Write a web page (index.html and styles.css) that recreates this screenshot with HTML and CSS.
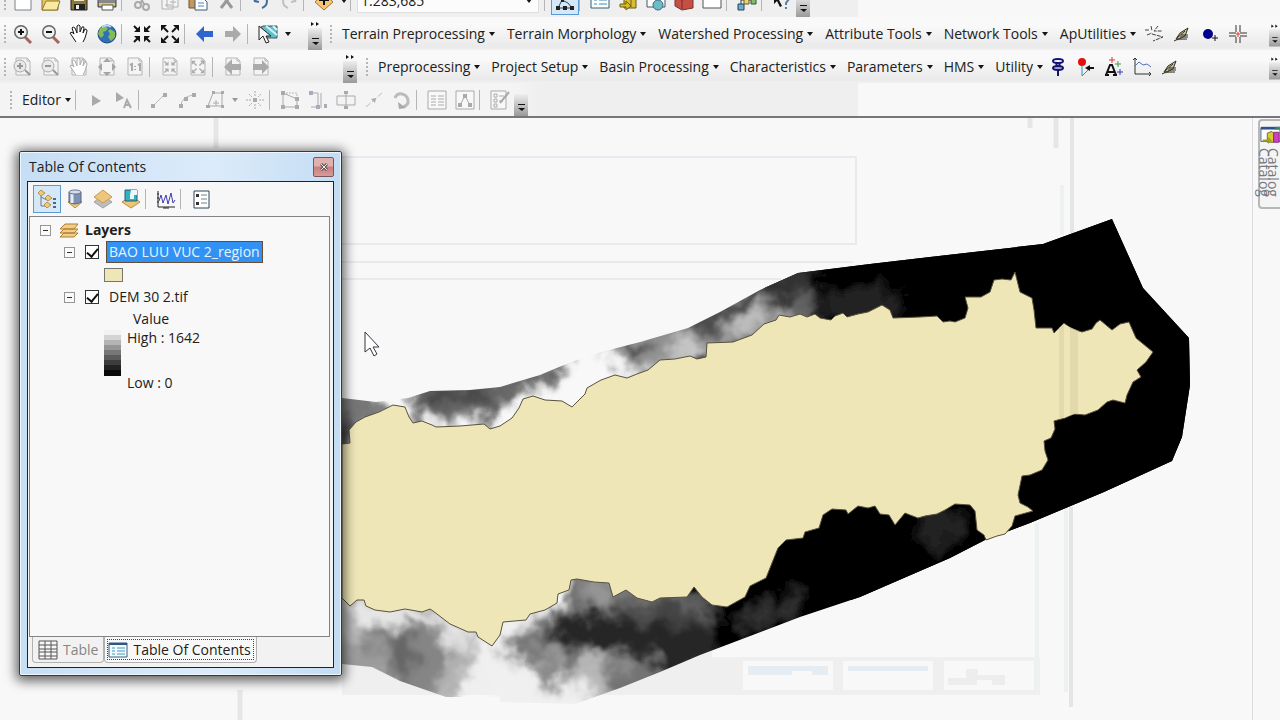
FILE: index.html
```html
<!DOCTYPE html>
<html lang="en">
<head>
<meta charset="utf-8">
<meta name="viewport" content="width=device-width, initial-scale=1">
<title>Map workspace</title>
<link rel="stylesheet" href="styles.css">
</head>
<body>
<svg class="defs" aria-hidden="true">
  <symbol id="page" viewBox="0 0 20 20"><path d="M3 1h11l3 3v14H3zM14 1v3h3" fill="#f4f4f4" stroke="#b5b5b5"/></symbol>
  <symbol id="lens" viewBox="0 0 20 20"><path d="M12 13l6 6" stroke="#a5655d" stroke-width="3"/><circle cx="8" cy="8" r="6.300" fill="#eef0f2" stroke="#666" stroke-width="1.500"/></symbol>
  <symbol id="hand" viewBox="0 0 20 20"><path d="M7 18L3 12 1 9q2-2 4 1L3 4q1-2 3 0l2 5L8 2q2-2 3 0v6l2-5q2-1 2 1l-1 5 2-4q2 0 2 2l-2 7-2 4" fill="#fff" stroke="currentColor"/></symbol>
  <symbol id="inward" viewBox="0 0 20 20"><path d="M2 2l4 4M18 2l-4 4M2 18l4-4M18 18l-4-4" fill="none" stroke="currentColor" stroke-width="2"/><path d="M8 2v6H2zM12 2v6h6zM8 18v-6H2zM12 18v-6h6z" fill="currentColor"/></symbol>
  <symbol id="outward" viewBox="0 0 20 20"><path d="M4 4l4 4M16 4l-4 4M4 16l4-4M16 16l-4-4" fill="none" stroke="currentColor" stroke-width="2"/><path d="M1 1h6L1 7zM19 1h-6l6 6zM1 19h6l-6-6zM19 19h-6l6-6z" fill="currentColor"/></symbol>
  <symbol id="arrow" viewBox="0 0 20 20"><path d="M1 10l8-8v5h9v6H9v5z" fill="currentColor"/></symbol>
  <symbol id="caret" viewBox="0 0 6 4"><path d="M0 0h6L3 4z" fill="currentColor"/></symbol>
  <symbol id="pen" viewBox="0 0 20 20"><path d="M4 15L8 9l8-5-3 8-6 3zM5 14l8-7M9 11h7M8 13h8M2 17l4-2h9" fill="#c9c795" stroke="#302c28"/></symbol>
  <symbol id="diamond" viewBox="0 0 20 20"><path d="M1 13l9-7 9 7-9 6z" fill="#bdbdbd" stroke="#a2a2a2"/><path d="M1 8l9-7 9 7-9 6z" fill="#edc67b" stroke="#c69a4b"/></symbol>
  <symbol id="drop" viewBox="0 0 14 34"><path d="M0 11h14v22H0z" fill="url(#moreFill)"/><path d="M4 21h7v1H4zM4 25h7l-3 3z" fill="#111"/></symbol>
  <symbol id="more" viewBox="0 0 14 34"><use href="#drop"/><path d="M3 5l3 2-3 2zM8 5l3 2-3 2z" fill="#111"/></symbol>
  <linearGradient id="moreFill" x2="0" y2="1"><stop offset="0" stop-color="#eee"/><stop offset="1" stop-color="#999"/></linearGradient>
</svg>

<header class="toolbars">
  <div class="bar bar-standard" role="toolbar" aria-label="Standard">
    <i class="grip"></i>
    <button class="tool" aria-label="New"><svg viewBox="0 0 20 20"><path d="M2 1h12l4 4v14H2z" fill="#fff" stroke="#77838d"/></svg></button>
    <button class="tool" aria-label="Open"><svg viewBox="0 0 20 20"><path d="M1 19V4h7l2 3h7v12z" fill="#e5c763" stroke="#8f762c"/><path d="M1 19l4-9h14l-3 9z" fill="#fae9a2" stroke="#8f762c"/></svg></button>
    <button class="tool" aria-label="Save"><svg viewBox="0 0 20 20"><path d="M2 2h16v17H2z" fill="#8c7838" stroke="#2b2517"/><path d="M5 2h10v8H5z" fill="#f0eacb"/><path d="M5 13h11v6H5z" fill="#222"/><path d="M7 14h3v4H7z" fill="#eee"/></svg></button>
    <button class="tool" aria-label="Print"><svg viewBox="0 0 20 20"><path d="M5 1h11v8H5z" fill="#fff" stroke="#555"/><path d="M1 8h18v8H1z" fill="#888" stroke="#444"/><path d="M2 12h16v3H2z" fill="#ddc96d"/><path d="M5 14h11v5H5z" fill="#fff" stroke="#555"/></svg></button>
    <i class="sep"></i>
    <button class="tool off" aria-label="Cut"><svg viewBox="0 0 20 20"><path d="M5 1l7 12M15 1L8 13" stroke="#aaa" stroke-width="2"/><circle cx="6" cy="14" r="3" fill="none" stroke="#aaa" stroke-width="2"/><circle cx="14" cy="16" r="3" fill="none" stroke="#aaa" stroke-width="2"/></svg></button>
    <button class="tool off" aria-label="Copy"><svg viewBox="0 0 20 20"><path d="M2 3h11v15H2zM7 1h11v15H7zM10 8h6M10 11h6M5 14h7" fill="#f4f4f4" stroke="#b2b2b2"/></svg></button>
    <button class="tool" aria-label="Paste"><svg viewBox="0 0 20 20"><path d="M1 1h14v16H1z" fill="#c69758" stroke="#735327"/><path d="M7 7h8l4 4v8H7z" fill="#fff" stroke="#3c5979"/><path d="M10 12h6M10 15h6" stroke="#4d83bb"/></svg></button>
    <button class="tool off" aria-label="Delete"><svg viewBox="0 0 20 20"><path d="M5 2l11 15M16 3L5 17" stroke="#999" stroke-width="3"/></svg></button>
    <i class="sep"></i>
    <button class="tool" aria-label="Undo"><svg viewBox="0 0 20 20"><path d="M3 10q11-9 13 0 0 5-5 7M3 10l5 1" fill="none" stroke="#426ca0" stroke-width="2"/></svg></button>
    <button class="tool off" aria-label="Redo"><svg viewBox="0 0 20 20"><path d="M17 10Q6 1 4 10q0 5 5 7M17 10l-5 1" fill="none" stroke="#c0c0c0" stroke-width="2"/></svg></button>
    <i class="sep"></i>
    <button class="tool" aria-label="Add Data"><svg viewBox="0 0 20 20"><path d="M1 11l9-9 9 9-9 8z" fill="#f3c575" stroke="#a57631"/><path d="M10 3v11M5 9h10" stroke="#111" stroke-width="2"/></svg></button>
    <button class="mini" aria-label="Add Data options"><svg class="caret"><use href="#caret"/></svg></button>
    <i class="sep"></i>
    <label class="scale"><input type="text" value="1:283,685" aria-label="Map scale"><svg class="caret"><use href="#caret"/></svg></label>
    <i class="sep"></i>
    <button class="tool pressed" aria-label="Editor Toolbar"><svg viewBox="0 0 20 20"><path d="M3 17h14M3 17L7 9l6 3 4 5M8 9L17 1" fill="none" stroke="#34465d"/><path d="M1 15h4v4H1zM8 15h4v4H8zM15 15h4v4h-4zM6 8h3v3H6z" fill="#222"/></svg></button>
    <i class="sep"></i>
    <button class="tool" aria-label="Table Of Contents"><svg viewBox="0 0 20 20"><path d="M1 2h18v15H1z" fill="#fff" stroke="#355a72"/><path d="M4 9h3M9 9h8M4 13h3M9 13h8" stroke="#378eb8"/></svg></button>
    <button class="tool" aria-label="Catalog"><svg viewBox="0 0 20 20"><path d="M6 1h12v16H6z" fill="#d9bd32" stroke="#64591b"/><path d="M13 1v15M2 13h6v-3l5 5-5 4v-3H2z" fill="#d7bc25" stroke="#6c611b"/></svg></button>
    <button class="tool" aria-label="Search"><svg viewBox="0 0 20 20"><path d="M1 1h18v15H1z" fill="#fff" stroke="#456"/><circle cx="12" cy="14" r="5" fill="#6dbec2" stroke="#37678c"/></svg></button>
    <button class="tool" aria-label="ArcToolbox"><svg viewBox="0 0 20 20"><path d="M1 6l7-5 11 5v11l-11 2-7-4z" fill="#c64e44" stroke="#77352f"/><path d="M1 6l7 3 11-3M8 9v9" stroke="#782e29" fill="none"/></svg></button>
    <button class="tool" aria-label="Python"><svg viewBox="0 0 20 20"><path d="M1 1h18v16H1z" fill="#fff" stroke="#555"/></svg></button>
    <i class="sep"></i>
    <button class="tool" aria-label="ModelBuilder"><svg viewBox="0 0 20 20"><path d="M4 14V9h12" fill="none" stroke="#333"/><path d="M1 13h6v6H1z" fill="#6badd5" stroke="#245"/><path d="M7 7h5v6H7z" fill="#ead55e" stroke="#654"/><path d="M14 7h5v6h-5z" fill="#83bd6d" stroke="#353"/></svg></button>
    <i class="sep"></i>
    <button class="tool" aria-label="What's This?"><svg viewBox="0 0 20 20"><path d="M2 1v12l3-3 3 6 2-1-3-6h4z" fill="#111"/><path d="M12 6q7-4 5 2l-3 4v2m0 2v2" fill="none" stroke="#557da4" stroke-width="2"/></svg></button>
    <svg class="more"><use href="#drop"/></svg>
  </div>

  <div class="bar" role="toolbar" aria-label="Tools">
    <i class="grip"></i>
    <button class="tool" aria-label="Zoom In"><svg viewBox="0 0 20 20"><use href="#lens"/><path d="M5 8h6M8 5v6" stroke="#111" stroke-width="2"/></svg></button>
    <button class="tool" aria-label="Zoom Out"><svg viewBox="0 0 20 20"><use href="#lens"/><path d="M5 8h6" stroke="#111" stroke-width="2"/></svg></button>
    <button class="tool" aria-label="Pan"><svg><use href="#hand"/></svg></button>
    <button class="tool" aria-label="Full Extent"><svg viewBox="0 0 20 20"><circle cx="10" cy="10" r="9" fill="#2e70b5" stroke="#1d477d"/><path d="M3 4l5-2 3 2-2 3-3 1 1 3-3 3-3-4zM13 5l5 3v5l-4 4-3-4 2-3-2-3z" fill="#86ba58"/><path d="M5 3q5-3 9 0" stroke="#b7dcf6" stroke-width="2" fill="none"/></svg></button>
    <i class="sep"></i>
    <button class="tool" aria-label="Fixed Zoom In"><svg><use href="#inward"/></svg></button>
    <button class="tool" aria-label="Fixed Zoom Out"><svg><use href="#outward"/></svg></button>
    <i class="sep"></i>
    <button class="tool back" aria-label="Previous Extent"><svg><use href="#arrow"/></svg></button>
    <button class="tool forward off" aria-label="Next Extent"><svg viewBox="0 0 20 20"><path d="M18 10l-8-8v5H2v6h8v5z" fill="currentColor"/></svg></button>
    <i class="sep"></i>
    <button class="tool" aria-label="Select Features"><svg viewBox="0 0 20 20"><path d="M5 2h14v12H9L3 3z" fill="#5bc1ce" stroke="#455"/><path d="M8 2l11 9M15 2l4 4" stroke="#d7f2f2" stroke-width="2"/><path d="M1 2v14l4-4 3 7 3-1-3-6h5z" fill="#f5f5f5" stroke="#222"/></svg></button>
    <button class="mini" aria-label="Selection options"><svg class="caret"><use href="#caret"/></svg></button>
    <svg class="more more-tools"><use href="#more"/></svg>
    <i class="grip"></i>
    <nav class="menus menus-terrain" aria-label="Terrain tools">
      <button class="menu">Terrain Preprocessing<svg class="caret"><use href="#caret"/></svg></button>
      <button class="menu">Terrain Morphology<svg class="caret"><use href="#caret"/></svg></button>
      <button class="menu">Watershed Processing<svg class="caret"><use href="#caret"/></svg></button>
      <button class="menu">Attribute Tools<svg class="caret"><use href="#caret"/></svg></button>
      <button class="menu">Network Tools<svg class="caret"><use href="#caret"/></svg></button>
      <button class="menu">ApUtilities<svg class="caret"><use href="#caret"/></svg></button>
    </nav>
    <button class="tool" aria-label="Flow Path"><svg viewBox="0 0 20 20"><path d="M1 6h4M7 2l1 5M14 2l-4 5h8M3 11l5-2M8 10l11 3-10 4" fill="none" stroke="#444" stroke-dasharray="4 1"/></svg></button>
    <button class="tool" aria-label="Edit"><svg><use href="#pen"/></svg></button>
    <button class="tool" aria-label="Add Point"><svg viewBox="0 0 20 20"><circle cx="8" cy="10" r="5" fill="#00008c"/><path d="M12 14h6M15 11v6" stroke="#111"/></svg></button>
    <button class="tool" aria-label="Batch Point"><svg viewBox="0 0 20 20"><path d="M1 9h7M1 12h7M12 9h7M12 12h7M8 1v7M12 1v7M8 13v6M12 13v6" stroke="#333"/><path d="M8 10h4M10 8v5" stroke="#ee3424"/></svg></button>
    <svg class="more more-end"><use href="#more"/></svg>
  </div>

  <div class="bar" role="toolbar" aria-label="Layout">
    <i class="grip"></i>
    <button class="tool off" aria-label="Page Zoom In"><svg viewBox="0 0 20 20"><use href="#page"/><circle cx="7" cy="9" r="6" fill="#e9e9e9" stroke="#aaa"/><path d="M4 9h6M7 6v6M12 13l5 5" stroke="#999" stroke-width="2"/></svg></button>
    <button class="tool off" aria-label="Page Zoom Out"><svg viewBox="0 0 20 20"><use href="#page"/><circle cx="7" cy="9" r="6" fill="#e9e9e9" stroke="#aaa"/><path d="M4 9h6M12 13l5 5" stroke="#999" stroke-width="2"/></svg></button>
    <button class="tool off" aria-label="Page Pan"><svg viewBox="0 0 20 20"><use href="#page"/><use href="#hand"/></svg></button>
    <button class="tool off" aria-label="Whole Page"><svg viewBox="0 0 20 20"><use href="#page"/><path d="M10 1l4 4H6zM10 19l4-4H6zM1 10l4-4v8zM19 10l-4-4v8z" fill="#a4a4a4"/></svg></button>
    <button class="tool off" aria-label="Actual Size"><svg viewBox="0 0 20 20"><use href="#page"/><path d="M5 8l2-1v7M13 8l2-1v7M10 9v1M10 12v1" fill="none" stroke="#aaa" stroke-width="2"/></svg></button>
    <i class="sep"></i>
    <button class="tool off" aria-label="Page Fixed Zoom In"><svg viewBox="0 0 20 20"><use href="#page"/><use href="#inward" x="3" y="3" width="14" height="14"/></svg></button>
    <button class="tool off" aria-label="Page Fixed Zoom Out"><svg viewBox="0 0 20 20"><use href="#page"/><use href="#outward" x="3" y="3" width="14" height="14"/></svg></button>
    <i class="sep"></i>
    <button class="tool off" aria-label="Page Back"><svg viewBox="0 0 20 20"><use href="#page"/><use href="#arrow"/></svg></button>
    <button class="tool forward off" aria-label="Page Forward"><svg viewBox="0 0 20 20"><use href="#page"/><path d="M18 10l-7-7v4H2v6h9v4z" fill="currentColor"/></svg></button>
    <svg class="more more-layout"><use href="#more"/></svg>
    <i class="grip"></i>
    <nav class="menus" aria-label="Hydrology tools">
      <button class="menu">Preprocessing<svg class="caret"><use href="#caret"/></svg></button>
      <button class="menu">Project Setup<svg class="caret"><use href="#caret"/></svg></button>
      <button class="menu">Basin Processing<svg class="caret"><use href="#caret"/></svg></button>
      <button class="menu">Characteristics<svg class="caret"><use href="#caret"/></svg></button>
      <button class="menu">Parameters<svg class="caret"><use href="#caret"/></svg></button>
      <button class="menu">HMS<svg class="caret"><use href="#caret"/></svg></button>
      <button class="menu">Utility<svg class="caret"><use href="#caret"/></svg></button>
    </nav>
    <button class="tool" aria-label="Pin"><svg viewBox="0 0 20 20"><ellipse cx="10" cy="4" rx="5" ry="2" fill="#fff" stroke="#13136e" stroke-width="2"/><path d="M8 5l1 5M12 5l-1 5M10 13v6" stroke="#13136e" stroke-width="2"/><ellipse cx="10" cy="11" rx="5" ry="2" fill="#9ea5d8" stroke="#13136e" stroke-width="2"/></svg></button>
    <button class="tool" aria-label="Outlet"><svg viewBox="0 0 20 20"><path d="M6 9v10l9-9" fill="none" stroke="#1d9bb6"/><circle cx="6" cy="5" r="4" fill="#e80e0e"/><path d="M9 11l5-3v2h4v2h-4v2z" fill="#111"/></svg></button>
    <button class="tool" aria-label="Add Labels"><svg viewBox="0 0 20 20"><path d="M2 18L6 8h2l4 10M4 15h6M1 18h4M9 18h4" fill="none" stroke="#111" stroke-width="2"/><path d="M5 3h6M8 0v6" stroke="#dc3930"/><path d="M11 7h6M14 4v6" stroke="#439b4b"/><path d="M13 15h6M16 12v6" stroke="#3434c2"/></svg></button>
    <button class="tool" aria-label="Profile"><svg viewBox="0 0 20 20"><path d="M3 1v16h16M1 3l2-2 2 2M17 15l2 2-2 2" fill="none" stroke="#333"/><path d="M3 9l4-4 4 3 4-1 4 3" fill="none" stroke="#536cbd"/></svg></button>
    <button class="tool" aria-label="Edit Parameters"><svg><use href="#pen"/></svg></button>
    <svg class="more more-end"><use href="#more"/></svg>
  </div>

  <div class="bar bar-editor" role="toolbar" aria-label="Editor">
    <i class="grip"></i>
    <button class="menu">Editor<svg class="caret"><use href="#caret"/></svg></button>
    <i class="sep"></i>
    <button class="tool off" aria-label="Edit Tool"><svg viewBox="0 0 20 20"><path d="M6 5l9 6-9 5z" fill="#aaa"/></svg></button>
    <button class="tool off" aria-label="Edit Annotation"><svg viewBox="0 0 20 20"><path d="M2 2l8 6-8 4z" fill="#aaa"/><path d="M10 18l3-8 4 8M11 15h5" fill="none" stroke="#aaa" stroke-width="2"/></svg></button>
    <i class="sep"></i>
    <button class="tool off" aria-label="Straight Segment"><svg viewBox="0 0 20 20"><path d="M4 16L16 4" stroke="#bbb"/><path d="M2 14h4v4H2zM14 3h4v4h-4z" fill="#aaa"/></svg></button>
    <button class="tool off" aria-label="Arc Segment"><svg viewBox="0 0 20 20"><path d="M4 16q0-9 12-11" fill="none" stroke="#bbb"/><path d="M2 14h4v4H2zM7 7h4v4H7zM15 3h4v4h-4z" fill="#aaa"/></svg></button>
    <button class="tool off" aria-label="Trace"><svg viewBox="0 0 20 20"><path d="M3 16L8 3h9v13zM8 13h6M11 10v6" fill="none" stroke="#aaa"/><path d="M7 1h3v3H7zM16 1h3v3h-3zM16 15h3v3h-3zM1 15h4v3H1z" fill="#aaa"/></svg></button>
    <button class="mini off" aria-label="Trace options"><svg class="caret"><use href="#caret"/></svg></button>
    <button class="tool off" aria-label="Point"><svg viewBox="0 0 20 20"><path d="M10 1v5M10 14v5M1 10h5M14 10h5M4 4l3 3M16 4l-3 3M4 16l3-3M16 16l-3-3" stroke="#aaa" stroke-dasharray="2 1"/><path d="M8 8h4v4H8z" fill="#aaa"/></svg></button>
    <i class="sep"></i>
    <button class="tool off" aria-label="Edit Vertices"><svg viewBox="0 0 20 20"><path d="M3 3v14h14V9L3 3" fill="none" stroke="#aaa"/><path d="M3 3h14v6" fill="none" stroke="#bbb" stroke-dasharray="2 1"/><path d="M1 1h4v4H1zM1 15h4v4H1zM15 15h4v4h-4zM15 7h4v4h-4z" fill="#aaa"/></svg></button>
    <button class="tool off" aria-label="Reshape"><svg viewBox="0 0 20 20"><path d="M3 3h7v14H3M13 3v15" fill="none" stroke="#aaa"/><path d="M1 1h4v4H1zM8 15h4v4H8zM16 14h3v4h-3z" fill="#a5aeb8"/></svg></button>
    <button class="tool off" aria-label="Cut Polygons"><svg viewBox="0 0 20 20"><path d="M1 6h18v9H1zM10 1v18" fill="none" stroke="#aaa"/><path d="M8 1h4v3H8zM8 16h4v3H8z" fill="#aaa"/></svg></button>
    <button class="tool off" aria-label="Split"><svg viewBox="0 0 20 20"><path d="M2 17L18 3" stroke="#bbb" stroke-dasharray="6 2"/><path d="M7 9l5-1-1 5z" fill="#aaa"/></svg></button>
    <button class="tool off" aria-label="Rotate"><svg viewBox="0 0 20 20"><path d="M3 8Q5 3 10 4t6 6-5 7" fill="none" stroke="#bbb" stroke-width="3"/><path d="M6 12l1 7 7-1z" fill="#aaa"/></svg></button>
    <i class="sep"></i>
    <button class="tool off" aria-label="Attributes"><svg viewBox="0 0 20 20"><path d="M1 1h18v18H1zM4 6h5M11 6h6M4 9h5M11 9h6M4 12h5M11 12h6M4 15h5M11 15h6" fill="#f8f8f8" stroke="#aaa"/></svg></button>
    <button class="tool off" aria-label="Sketch Properties"><svg viewBox="0 0 20 20"><path d="M1 1h18v18H1zM5 15l5-9 5 9" fill="#f8f8f8" stroke="#aaa"/><path d="M3 13h4v4H3zM8 4h4v4H8zM13 13h4v4h-4z" fill="#aaa"/></svg></button>
    <i class="sep"></i>
    <button class="tool off" aria-label="Create Features"><svg viewBox="0 0 20 20"><path d="M1 1h15v18H1zM4 4h3v3H4zM9 6h5M4 9h3v3H4zM9 11h4M4 14h3v3H4z" fill="#f8f8f8" stroke="#aaa"/><path d="M10 13l9-11" stroke="#aaa" stroke-width="2"/></svg></button>
    <svg class="more"><use href="#drop"/></svg>
  </div>
</header>

<main class="workspace">
  <section class="map" aria-label="Map">
    <svg class="map-canvas" viewBox="0 118 1252 602" preserveAspectRatio="xMinYMin slice" role="img" aria-label="Elevation raster with watershed polygon">
      <defs>
        <filter id="terrain" filterUnits="userSpaceOnUse" x="260" y="150" width="1000" height="620">
          <feGaussianBlur stdDeviation="6" result="soft"/>
          <feTurbulence type="fractalNoise" baseFrequency=".04" numOctaves="3" seed="8" result="noise"/>
          <feDisplacementMap in="soft" in2="noise" scale="36" xChannelSelector="R" yChannelSelector="G"/>
        </filter>
        <clipPath id="raster"><path d="M342 398L376 402 408 398 430 391 470 390 500 387 540 375 559 367 590 355 640 342 688 328 720 312 760 290 798 273 870 264 930 257 1043 244 1112 219 1143 288 1189 338 1190 385 1182 437 1172 461 1104 492 1030 523 985 540 950 558 860 597 800 617 700 655 660 672 620 688 575 704 500 702 500 697 446 697 400 681 372 667 342 664z"/></clipPath>
      </defs>
      <path d="M342 612h370v45h328v38H342z" fill="#efefef"/>
      <path d="M743 661h90v29h-90zM843 661h90v29h-90zM944 661h90v29h-90z" fill="#f8f8f8"/>
      <path d="M748 666h80v9h-16v-4h-20v4h-44zM848 666h80v5h-80z" fill="#e5edf2"/>
      <path d="M948 678h18v-9h12v6h27v10h-13v-5h-15v5h-29z" fill="#ededed"/>
      <g fill="none" stroke="#e9e9f0">
        <path d="M341 157h515v87H341M341 262h512M341 279h440" stroke-width="2"/>
        <path d="M216 118v30M1056 118v30M240 690v30M1030 105v23" stroke="#e6e6e6" stroke-width="5"/>
        <path d="M1072 118v119M1071 507v200" stroke="#e5e5e5" stroke-width="4"/>
        <path d="M1062 185v50M1037 523v172M1066 507v185" stroke="#edf1f1" stroke-width="4"/>
      </g>
      <g clip-path="url(#raster)">
        <path d="M800 200h400v400H640z" fill="#020303"/>
        <g filter="url(#terrain)">
          <path d="M710 180h520v560H640V520z" fill="#020303"/>
          <path d="M310 388h60l15 34-20 14h-50z" fill="#777"/>
          <path d="M325 418h30l-5 50h-25z" fill="#444"/>
          <path d="M416 375h72l80-28-8 36-40 8-20 17-16 18-14-10-15 11-33-14-20 13z" fill="#666"/>
          <path d="M430 384h66l-8 20-18 3-14-13-12 14-22-5z" fill="#484848"/>
          <path d="M599 345l60-30 55-15 25-36 65 10 5 55-55 12-60 25-60 10z" fill="#929292"/>
          <path d="M625 338l32 1-20 25zM680 315l75-28 12 16-50 27-27 5z" fill="#4c4c4c"/>
          <path d="M665 347l26-9 19 17-32 14zM722 323l40-14 9 11-40 17z" fill="#c6c6c6"/>
          <path d="M742 280l45-22 30 12-5 37-20 5-28-14z" fill="#333"/>
          <path d="M788 295l25-2 4 22-25 5z" fill="#646464"/>
          <path d="M825 290l60-8 20 25-30 15-48 2z" fill="#222"/>
          <path d="M320 585h140l20 55-28 67H320z" fill="#b2b2b2"/>
          <path d="M353 595l65 10 55 20-10 30-30 5-22-30-50-5z" fill="#e6e6e6"/>
          <path d="M364 624l40 5 20-12 28 22-20 69-42-24-26-29z" fill="#858585"/>
          <path d="M325 648l30-5 33 7-4 20-58 9z" fill="#9b9b9b"/>
          <path d="M386 640l22-6 10 28-14 14-20-12z" fill="#666"/>
          <path d="M525 632l30-20 18-40h66l75 30v80l-66 50h-90z" fill="#737373"/>
          <path d="M503 637l49-12 22 10-10 25-54 3z" fill="#777"/>
          <path d="M570 610l40 4 25-6 75 10 10 46-50 18-30-30-80-5-10-20z" fill="#282828"/>
          <path d="M586 580l30 2-6 24-20 6z" fill="#969696"/>
          <path d="M622 598l85 6 4 18-78 1z" fill="#4d4d4d"/>
          <path d="M490 662l35-5 22 36 14-20 32 2 15 28-20 20h-98z" fill="#f0f0f0"/>
          <path d="M535 640l25 12 10 28-20-6z" fill="#999"/>
          <path d="M570 677l30-29 32 15-37 45z" fill="#b7b7b7"/>
          <path d="M605 660l18-4 2 27-20 9z" fill="#777"/>
          <path d="M655 604l29-7 14 24-31 8z" fill="#454545"/>
          <path d="M732 614l33-13 28 4-35 27z" fill="#303030"/>
          <path d="M785 595l12-10 8 23-14 8z" fill="#333"/>
          <path d="M915 515l46-3 4 30-36 7z" fill="#232323"/>
        </g>
      </g>
      <path d="M342 444L350 443 349 430 356 422 365 417 379 412 393 405 405 407 409 417 413 423 422 421 432 425 436 427 460 426 484 424 490 429 500 426 512 418 519 408 523 399 533 396 545 400 562 401 572 407 585 394 587 388 601 380 615 375 627 378 637 374 648 370 660 360 675 359 690 356 697 359 706 357 707 343 733 342 752 335 764 324 776 320 779 315 790 317 800 314 807 317 815 314 820 318 831 320 835 316 843 313 847 317 858 314 868 312 882 305 890 310 893 318 920 317 937 316 943 322 950 321 955 322 965 318 968 308 965 297 981 297 990 292 994 280 1002 279 1011 280 1015 272 1020 292 1032 298 1034 310 1036 328 1052 328 1054 333 1064 323 1070 328 1082 332 1092 329 1096 323 1100 320 1112 330 1120 324 1129 322 1136 338 1153 352 1146 362 1137 370 1141 377 1133 382 1127 395 1125 403 1113 400 1107 402 1098 410 1085 415 1074 414 1065 418 1054 421 1055 429 1051 438 1044 441 1045 451 1048 460 1042 470 1030 475 1022 476 1018 495 1020 503 1028 507 1033 511 1015 516 1012 526 1005 534 997 536 986 540 984 535 977 530 975 511 970 505 955 504 945 510 937 514 925 516 918 518 910 515 905 513 895 525 889 515 880 514 875 506 868 508 858 506 848 514 846 510 832 509 823 515 819 528 805 532 803 538 786 540 778 548 772 563 766 578 750 586 745 597 736 602 727 607 712 605 702 597 694 587 687 597 660 598 652 602 637 598 626 590 613 597 609 583 594 582 577 579 571 580 569 590 558 594 557 603 545 610 530 614 526 620 503 622 500 635 492 646 478 637 476 632 468 632 450 624 433 611 430 609 422 612 405 609 390 612 375 610 366 606 364 600 357 600 350 606 342 598z" fill="#efe6b8" stroke="#57513e" stroke-linejoin="round"/>
      <path d="M1059 328l5-4 14 7v82l-19 6z" fill="#dfd6aa" opacity=".8"/><path d="M1064 324l6 4v87l-6 3z" fill="#efe6b8"/>
      <path d="M365 332v20l5-4 4 8 3-2-4-7h6z" fill="#fff" stroke="#34343e"/>
    </svg>
  </section>

  <aside class="dock">
    <button class="catalog-tab">
      <svg class="catalog-icon" viewBox="0 0 22 20" aria-hidden="true"><path d="M1 2h21v15H1z" fill="#fff" stroke="#3c5376"/><path d="M1 1h21v3H1z" fill="#31518a"/><path d="M17 1h5v3h-5z" fill="#3e8963"/><path d="M8 8l5-2 2 2v10H8z" fill="#d9ca31" stroke="#6a651d"/><path d="M15 7h6v11h-6z" fill="#d33cc4" stroke="#753876"/><path d="M3 15h6v-3l4 4-4 4v-3H3z" fill="#9aa326"/></svg>
      <span class="catalog-words"><span>Catalog</span><span aria-hidden="true">Catalog</span></span>
    </button>
  </aside>

  <section class="toc" aria-label="Table Of Contents">
    <header class="toc-title"><h1>Table Of Contents</h1><button class="close" aria-label="Close"><svg viewBox="0 0 8 8"><path d="M1 1l6 6M7 1L1 7" stroke="#66565a" stroke-width="3"/><path d="M1 1l6 6M7 1L1 7" stroke="#eee"/></svg></button></header>
    <div class="toc-body">
      <div class="toc-tools">
        <button class="tool pressed" aria-label="List By Drawing Order"><svg viewBox="0 0 20 20"><path d="M4 5v12h5M4 8l6 3" fill="none" stroke="#777"/><path d="M1 4l3-3 4 3-4 3zM8 9l3-3 4 3-4 3zM7 16l3-3 4 3-4 3z" fill="#eec97c" stroke="#b99245"/><path d="M16 10h3M16 14h3M16 18h3" stroke="#476a8c" stroke-width="2"/></svg></button>
        <button class="tool" aria-label="List By Source"><svg viewBox="0 0 20 20"><path d="M3 13l7-4 7 4-7 6z" fill="#ebca81" stroke="#b38b43"/><path d="M4 3v10q6 4 12 0V3" fill="#7e91b4" stroke="#5a667d"/><path d="M7 5v9" stroke="#e5edfa" stroke-width="3"/><ellipse cx="10" cy="3" rx="6" ry="2" fill="#d6deeb" stroke="#66758d"/></svg></button>
        <button class="tool" aria-label="List By Visibility"><svg><use href="#diamond"/></svg></button>
        <button class="tool" aria-label="List By Selection"><svg viewBox="0 0 20 20"><path d="M1 13l9-6 9 6-9 6z" fill="#ecc675" stroke="#bb8d46"/><path d="M4 1h12v11H4z" fill="#2ab2c5" stroke="#365970"/><path d="M10 1h6v5h-3v4H9V6z" fill="#eef7f7"/></svg></button>
        <i class="sep"></i>
        <button class="tool" aria-label="Profile"><svg viewBox="0 0 20 20"><path d="M2 2v16h17M1 5h2M1 9h2M1 13h2M7 19h6" fill="none" stroke="#222"/><path d="M3 12l2-6 2 8 3-8 2 9 3-11 2 10 2-3" fill="none" stroke="#3c3cb4"/></svg></button>
        <i class="sep"></i>
        <button class="tool" aria-label="Options"><svg viewBox="0 0 20 20"><path d="M3 2h15v17H3z" fill="#fff" stroke="#345"/><path d="M5 5h3v3H5zM5 13h3v3H5z" fill="#333"/><path d="M10 6h6M10 10h6M10 14h6" stroke="#69849b"/></svg></button>
      </div>
      <div class="tree">
        <div class="row root"><button class="fold" aria-label="Collapse Layers"></button><svg class="layers-icon" viewBox="0 0 20 16" aria-hidden="true"><path d="M1 15l4-4h14l-4 4zM1 11l4-4h14l-4 4zM1 7l5-5h13l-4 5z" fill="#f2cd86" stroke="#ad7e36"/></svg><strong>Layers</strong></div>
        <div class="row layer"><button class="fold" aria-label="Collapse region layer"></button><input type="checkbox" id="region" checked><label class="selected" for="region">BAO LUU VUC 2_region</label></div>
        <div class="row swatch-row"><i class="swatch"></i></div>
        <div class="row layer"><button class="fold" aria-label="Collapse elevation layer"></button><input type="checkbox" id="dem" checked><label for="dem">DEM 30 2.tif</label></div>
        <div class="value">Value</div>
        <div class="ramp-row"><i class="ramp"></i><div class="range"><span>High : 1642</span><span>Low : 0</span></div></div>
      </div>
      <div class="tabs" role="tablist">
        <button class="tab" role="tab" aria-selected="false"><svg viewBox="0 0 20 20"><path d="M1 1h18v18H1zM1 5h18M1 9h18M1 12h18M1 16h18M7 1v18M13 1v18" fill="#f7f7f7" stroke="#555"/></svg>Table</button>
        <button class="tab active" role="tab" aria-selected="true"><span class="focus"><svg viewBox="0 0 20 16"><path d="M1 1h18v14H1z" fill="#f3fafd" stroke="#366080"/><path d="M1 2h18" stroke="#31557e" stroke-width="2"/><path d="M4 6h3M9 6h8M4 9h3M9 9h8M4 12h3M9 12h8" stroke="#3a9cc0"/></svg>Table Of Contents</span></button>
      </div>
    </div>
  </section>
</main>
</body>
</html>
```
FILE: styles.css
```css
* { box-sizing: border-box; }
body {
  margin: 0;
  height: 100vh;
  overflow: hidden;
  display: flex;
  flex-direction: column;
  background: #f8f8f8;
  color: #202020;
  font: 14px/20px "Open Sans", "Noto Sans", sans-serif;
}
button, input { font: inherit; color: inherit; margin: 0; }
button { border: 0; padding: 0; background: transparent; }
.defs { position: absolute; width: 0; height: 0; }

.toolbars {
  flex: none;
  margin-top: -16px;
  border-bottom: 2px solid #77777b;
  background: linear-gradient(90deg, #efefef 67%, #f8f8f8 67%);
}
.bar {
  display: flex;
  align-items: center;
  height: 33px;
  padding-left: 4px;
  background: linear-gradient(#f9f9f9 0 28%, #f4f4f4 45%, #eaeaea 90%, #f1f1f1);
}
.bar-standard, .bar-editor { width: 67%; }
.bar-standard { background: #efefef; }
.bar-editor { padding-left: 10px; background: linear-gradient(90deg, #f4f4f4 60%, #efefef 63%); }
.grip { flex: none; width: 5px; height: 18px; border-left: 2px dotted #b5b5b5; }
.tool {
  flex: none;
  display: flex;
  align-items: center;
  justify-content: center;
  width: 28px;
  height: 28px;
  color: #151515;
}
.tool svg { width: 20px; height: 20px; }
.off { color: #ababab; }
.back { color: #2d66cf; }
.forward { color: #aaa; }
.pressed { border: 1px solid #5b9bd3; background: #d5e8f8; }
.sep { flex: none; width: 7px; height: 20px; border-left: 1px solid #b5b5b5; }
.mini { width: 12px; }
.caret { width: 6px; height: 4px; color: #151515; }
.off .caret { color: #999; }
.mini .caret { display: block; margin: auto; }
.more { flex: none; width: 14px; height: 34px; }
.more-tools { margin: 0 8px 0 14px; }
.more-layout { margin: 0 9px 0 68px; }
.more-end { margin-left: auto; width: 11px; }
.scale {
  display: flex;
  align-items: center;
  width: 182px;
  height: 24px;
  padding-right: 6px;
  margin-right: 5px;
  border: 1px solid #dedede;
  background: #fcfcfc;
}
.scale input { flex: 1; min-width: 0; padding: 0 3px; border: 0; background: transparent; }
.menus { display: flex; gap: 11px; padding: 0 1px 0 7px; }
.menus-terrain { gap: 12px; padding-right: 4px; }
.menu { display: flex; align-items: center; gap: 4px; white-space: nowrap; }
.bar-editor .menu { padding: 0 4px 0 7px; }

.workspace { position: relative; flex: 1; min-height: 0; display: flex; }
.map { flex: 1; min-width: 0; overflow: hidden; border-right: 1px solid #dcdce2; }
.map-canvas { display: block; width: 100%; height: 100%; }
.dock { flex: none; width: 27px; padding: 1px 0 0 5px; }
.catalog-tab {
  display: flex;
  flex-direction: column;
  align-items: flex-start;
  gap: 3px;
  width: 100%;
  height: 90px;
  padding: 4px 0;
  border: 2px solid #b8b8b8;
  border-right: 0;
  border-radius: 4px 0 0 4px;
  background: #f4f4f4;
}
.catalog-icon { width: 20px; height: 20px; }
.catalog-words { display: flex; color: #77777c; }
.catalog-words span { writing-mode: vertical-rl; line-height: 9px; }

.toc {
  position: absolute;
  left: 19px;
  top: 33px;
  width: 323px;
  height: 525px;
  display: flex;
  flex-direction: column;
  padding: 0 7px 7px;
  border: 1px solid #303b49;
  border-radius: 2px;
  background: linear-gradient(90deg, #c6def4, #dcebfa 60%, #c3dcf4);
  box-shadow: inset 0 0 0 1px #eef6fd, 0 2px 12px 3px rgb(0 0 0 / 60%);
}
.toc-title { display: flex; align-items: center; justify-content: space-between; height: 29px; padding-left: 2px; }
.toc-title h1 { margin: 0; font-size: 14px; font-weight: 400; }
.close {
  display: flex;
  align-items: center;
  justify-content: center;
  width: 21px;
  height: 20px;
  border: 1px solid #77565c;
  border-radius: 2px;
  background: linear-gradient(#dfb0ae 45%, #c77f7d 50%, #d79b98);
}
.close svg { width: 8px; height: 8px; }
.toc-body { flex: 1; display: flex; flex-direction: column; padding: 0 3px 4px 1px; border: 1px solid #222; background: #f2f2f2; }
.toc-tools { display: flex; align-items: center; height: 34px; padding-left: 4px; background: #f7f7f7; }
.tree { flex: 1; padding: 2px 0 0 10px; border: 1px solid #828287; background: #f8f8f8; }
.row { display: flex; align-items: center; height: 22px; }
.layer { padding-left: 24px; }
.fold { width: 11px; height: 11px; border: 1px solid #969696; background: linear-gradient(#333, #333) center / 5px 1px no-repeat, #fafafa; }
.layers-icon { width: 20px; height: 16px; margin: 0 6px 0 8px; }
.row input {
  appearance: none;
  width: 14px;
  height: 14px;
  margin: 0 7px 0 10px;
  border: 1px solid #333;
  background: #fff;
  position: relative;
}
.row input:checked::after {
  content: "";
  position: absolute;
  left: 3px;
  top: 0;
  width: 5px;
  height: 9px;
  border: solid #111;
  border-width: 0 2px 2px 0;
  transform: rotate(40deg);
}
.row label { padding: 0 2px; border: 1px solid transparent; white-space: nowrap; }
.row .selected { border: 1px solid #684c36; background: #3192f3; color: #e7f2ff; }
.swatch-row { height: 23px; padding-left: 64px; }
.swatch { width: 19px; height: 14px; border: 1px solid #77766d; background: #efe6b8; }
.value { padding-left: 93px; line-height: 22px; }
.ramp-row { display: flex; gap: 6px; padding-left: 64px; }
.ramp { width: 17px; height: 46px; background: linear-gradient(#f2f2f2 0 11%, #d4d4d4 0 22%, #b4b4b4 0 33%, #969696 0 44%, #777 0 55%, #5b5b5b 0 66%, #3d3d3d 0 77%, #222 0 88%, #080808 0); }
.range { display: flex; flex-direction: column; gap: 25px; line-height: 20px; margin-top: -2px; }
.tabs { display: flex; height: 26px; padding-left: 3px; }
.tab { display: flex; align-items: center; gap: 5px; padding: 0 5px; border: 1px solid #b1b1b1; border-top: 0; border-radius: 0 0 4px 4px; color: #858585; white-space: nowrap; }
.tab svg { width: 20px; height: 20px; }
.active { padding: 0 3px; background: #f8f8f8; color: #202020; }
.focus { display: flex; align-items: center; gap: 5px; height: 19px; padding-right: 2px; outline: 1px dotted #444; }
```
